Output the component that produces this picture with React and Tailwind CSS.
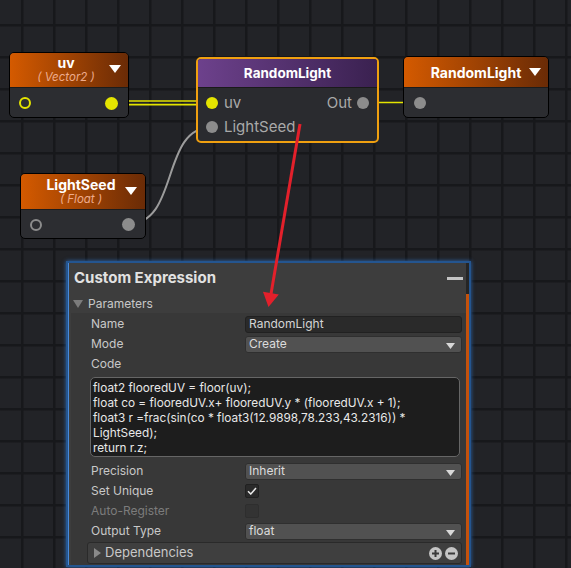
import React from "react";

const Tri = ({ className }) => (
  <svg width="12" height="8" viewBox="0 0 12 8" className={className}>
    <path d="M0 0H12L6 8Z" fill="#ffffff" />
  </svg>
);

const SmallTri = () => (
  <svg width="9" height="6" viewBox="0 0 9 6" className="absolute right-[6px] top-[6px]">
    <path d="M0 0H9L4.5 6Z" fill="#d8d8d8" />
  </svg>
);

function Dropdown({ value }) {
  return (
    <div className="relative h-[17px] rounded-[3px] bg-[#515151] border border-[#2f2f2f] flex items-center pl-[3px] text-[#dcdcdc]">
      {value}
      <SmallTri />
    </div>
  );
}

function Row({ label, children, disabled }) {
  return (
    <div className="h-[20px] flex items-center pr-[4px]">
      <div className={"w-[174px] pl-[20px] shrink-0 " + (disabled ? "text-[#7c7c7c]" : "text-[#c8c8c8]")}>{label}</div>
      <div className="flex-1 min-w-0">{children}</div>
    </div>
  );
}

export default function App() {
  return (
    <div className="relative w-[571px] h-[568px] overflow-hidden bg-[#222327] font-['Inter',sans-serif] bg-[linear-gradient(to_right,#17181b_0,#17181b_2px,transparent_3px),linear-gradient(to_bottom,#17181b_0,#17181b_2px,transparent_3px)] bg-[length:32px_32px] bg-[position:21px_24px]">
      {/* wires */}
      <svg className="absolute inset-0" width="571" height="568">
        <line x1="112" y1="101" x2="212" y2="101" stroke="#e4e400" strokeWidth="1.7" />
        <line x1="112" y1="104.6" x2="212" y2="104.6" stroke="#e4e400" strokeWidth="1.7" />
        <line x1="362" y1="102.5" x2="420" y2="102.5" stroke="#e4e400" strokeWidth="1.6" />
        <path d="M128 224 C 180 224, 160 127, 212 127" fill="none" stroke="#9c9c9c" strokeWidth="2" />
      </svg>

      {/* uv node */}
      <div className="absolute left-[9px] top-[52px] w-[120px] h-[66px] rounded-[5px] border border-black bg-[#2c2d31] overflow-hidden">
        <div className="relative h-[35px] bg-[linear-gradient(to_right,#d45a00,#6a2b06)] border-b border-[#1c1c1c] flex flex-col items-center justify-center pr-[6px]">
          <div className="text-white font-bold text-[14px] leading-[14px]">uv</div>
          <div className="italic text-[11.5px] leading-[14px] text-[#eeab8c]">( Vector2 )</div>
          <Tri className="absolute right-[7px] top-[12px]" />
        </div>
        <div className="h-[30px] flex items-center justify-between pl-[9px] pr-[10px]">
          <div className="w-[12px] h-[12px] rounded-full border-2 border-[#e4e400]" />
          <div className="w-[13px] h-[13px] rounded-full bg-[#e4e400]" />
        </div>
      </div>

      {/* RandomLight (selected) node */}
      <div className="absolute left-[196px] top-[57px] w-[183px] h-[86px] rounded-[5px] border-2 border-[#f0a010] bg-[#2a2b2f] overflow-hidden">
        <div className="h-[29px] bg-[linear-gradient(to_right,#6d418c,#3a2150)] border-b border-[#1a1a1a] flex items-center justify-center">
          <div className="text-white font-bold text-[13.5px]">RandomLight</div>
        </div>
        <div className="pt-[3px] text-[15px] text-[#a9a9a9]">
          <div className="h-[24px] flex items-center justify-between pl-[8px] pr-[8px]">
            <div className="flex items-center gap-[6px]">
              <div className="w-[12px] h-[12px] rounded-full bg-[#e4e400]" />
              <span>uv</span>
            </div>
            <div className="flex items-center gap-[5px]">
              <span>Out</span>
              <div className="w-[12px] h-[12px] rounded-full bg-[#8c8c8c]" />
            </div>
          </div>
          <div className="h-[24px] flex items-center pl-[8px] gap-[6px]">
            <div className="w-[12px] h-[12px] rounded-full bg-[#8c8c8c]" />
            <span>LightSeed</span>
          </div>
        </div>
      </div>

      {/* RandomLight output node */}
      <div className="absolute left-[403px] top-[56px] w-[146px] h-[62px] rounded-[5px] border border-black bg-[#2c2d31] overflow-hidden">
        <div className="relative h-[31px] bg-[linear-gradient(to_right,#d45a00,#6a2b06)] border-b border-[#1c1c1c] flex items-center justify-center">
          <div className="text-white font-bold text-[14px]">RandomLight</div>
          <Tri className="absolute right-[7px] top-[11px]" />
        </div>
        <div className="h-[29px] flex items-center pl-[10px]">
          <div className="w-[12px] h-[12px] rounded-full bg-[#8c8c8c]" />
        </div>
      </div>

      {/* LightSeed node */}
      <div className="absolute left-[20px] top-[173px] w-[126px] h-[66px] rounded-[5px] border border-black bg-[#2c2d31] overflow-hidden">
        <div className="relative h-[36px] bg-[linear-gradient(to_right,#d45a00,#6a2b06)] border-b border-[#1c1c1c] flex flex-col items-center justify-center pr-[4px]">
          <div className="text-white font-bold text-[14px] leading-[14px]">LightSeed</div>
          <div className="italic text-[11.5px] leading-[14px] text-[#eeab8c]">( Float )</div>
          <Tri className="absolute right-[8px] top-[13px]" />
        </div>
        <div className="h-[29px] flex items-center justify-between pl-[9px] pr-[10px]">
          <div className="w-[12px] h-[12px] rounded-full border-2 border-[#8c8c8c]" />
          <div className="w-[13px] h-[13px] rounded-full bg-[#8c8c8c]" />
        </div>
      </div>

      {/* Custom Expression panel */}
      <div className="absolute left-[66px] top-[261px] w-[405px] h-[306px] border-2 border-[#24558f] shadow-[0_0_4px_rgba(50,120,210,0.8)] bg-[#3d3d3d] flex text-[12px]">
        <div className="flex-1 min-w-0 flex flex-col border-l border-[#4a8ad8]">
          <div className="h-[31px] shrink-0 flex items-center justify-between pl-[5px] pr-[3px]">
            <span className="font-bold text-[15px] text-[#e2e2e2]">Custom Expression</span>
            <div className="w-[16px] h-[3px] bg-[#c4c4c4]" />
          </div>
          <div className="h-[19px] shrink-0 flex items-center pl-[4px] gap-[5px] text-[#c8c8c8]">
            <svg width="10" height="8" viewBox="0 0 10 8"><path d="M0 0H10L5 8Z" fill="#7c7c7c" /></svg>
            <span>Parameters</span>
          </div>
          <div className="flex-1 ml-[2px] bg-[#383838] pt-[1px] flex flex-col">
            <Row label="Name">
              <div className="h-[17px] rounded-[3px] bg-[#2a2a2a] border border-[#212121] flex items-center pl-[3px] text-[#d4d4d4]">RandomLight</div>
            </Row>
            <Row label="Mode"><Dropdown value="Create" /></Row>
            <Row label="Code" />
            <div className="mt-[3px] ml-[19px] mr-[6px] h-[80px] rounded-[5px] border border-[#666666] bg-[#1d1d1d] pl-[2px] pt-[3px] leading-[15px] text-[11.8px] text-[#e8e8e8] whitespace-pre">
              <div>float2 flooredUV = floor(uv);</div>
              <div>float co = flooredUV.x+ flooredUV.y * (flooredUV.x + 1);</div>
              <div>float3 r =frac(sin(co * float3(12.9898,78.233,43.2316)) *</div>
              <div>LightSeed);</div>
              <div>return r.z;</div>
            </div>
            <div className="mt-[4px]">
              <Row label="Precision"><Dropdown value="Inherit" /></Row>
              <Row label="Set Unique">
                <div className="w-[14px] h-[14px] rounded-[2px] bg-[#2a2a2a] border border-[#202020] flex items-center justify-center">
                  <svg width="10" height="8" viewBox="0 0 10 8"><path d="M1 4.2L3.8 7L9 1" fill="none" stroke="#e8e8e8" strokeWidth="1.5" /></svg>
                </div>
              </Row>
              <Row label="Auto-Register" disabled>
                <div className="w-[14px] h-[14px] rounded-[2px] bg-[#333333] border border-[#2e2e2e]" />
              </Row>
              <Row label="Output Type"><Dropdown value="float" /></Row>
            </div>
            <div className="mt-[1px] ml-[16px] mr-[4px] h-[22px] rounded-[3px] bg-[#3f3f3f] border border-[#2a2a2a] flex items-center pl-[6px] pr-[3px] text-[#c8c8c8] text-[13px]">
              <svg width="7" height="10" viewBox="0 0 7 10" className="mr-[4px]"><path d="M0 0L7 5L0 10Z" fill="#8a8a8a" /></svg>
              <span className="flex-1">Dependencies</span>
              <div className="flex gap-[3px]">
                <svg width="13" height="13" viewBox="0 0 13 13"><circle cx="6.5" cy="6.5" r="6.5" fill="#c4c4c4" /><path d="M3 6.5H10M6.5 3V10" stroke="#3a3a3a" strokeWidth="2" /></svg>
                <svg width="13" height="13" viewBox="0 0 13 13"><circle cx="6.5" cy="6.5" r="6.5" fill="#c4c4c4" /><path d="M3 6.5H10" stroke="#3a3a3a" strokeWidth="2" /></svg>
              </div>
            </div>
          </div>
        </div>
        <div className="w-[3px] shrink-0 flex flex-col">
          <div className="h-[31px] bg-[#252525]" />
          <div className="flex-1 bg-[#c4520c]" />
        </div>
      </div>

      {/* red arrow */}
      <svg className="absolute inset-0 pointer-events-none" width="571" height="568">
        <line x1="300" y1="124" x2="271" y2="294" stroke="#e3202b" strokeWidth="3" />
        <polygon points="268.5,307 263,291.8 278.8,294.6" fill="#e3202b" />
      </svg>
    </div>
  );
}
